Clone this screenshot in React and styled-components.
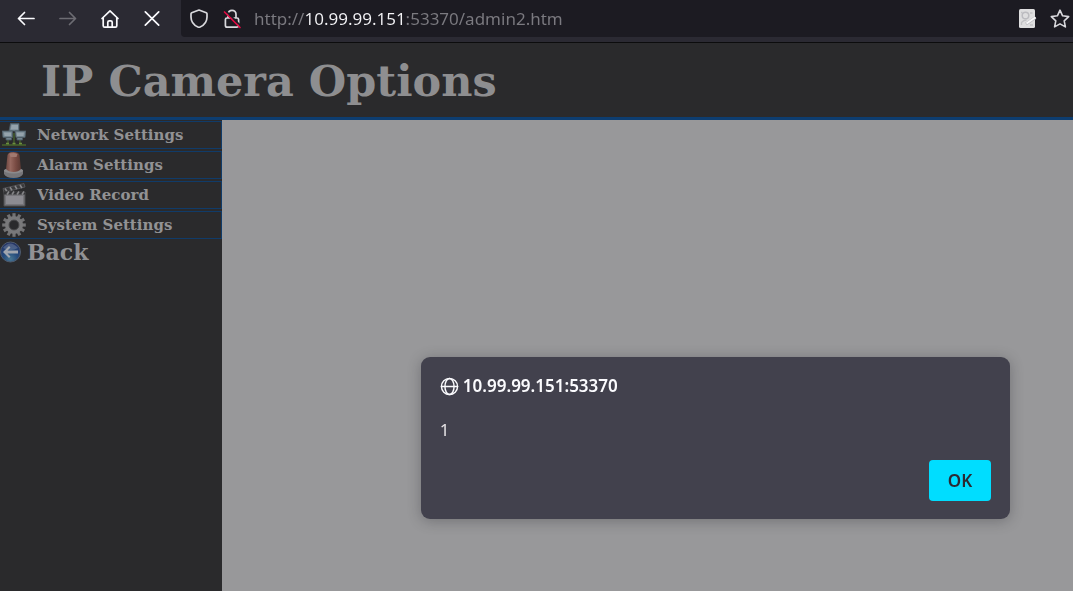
import React from "react";
import styled, { createGlobalStyle } from "styled-components";

const GlobalStyle = createGlobalStyle`
  * { box-sizing: border-box; }
  html, body { margin: 0; background: #2a2a2c; }
  body { overflow: hidden; }
`;

const uiFont = `"Noto Sans", "Open Sans", sans-serif`;
const pageFont = `"DejaVu Serif", "Liberation Serif", serif`;

const Window = styled.div`
  display: flex;
  flex-direction: column;
  min-height: 100vh;
  font-family: ${pageFont};
`;

const Toolbar = styled.div`
  display: flex;
  align-items: flex-start;
  height: 43px;
  background: #2b2a33;
  border-bottom: 1px solid #0c0c0d;
`;

const NavButtons = styled.div`
  display: flex;
  gap: 22px;
  padding: 9px 19px 0 16px;
`;

const ToolButton = styled.button`
  display: flex;
  flex: none;
  padding: 0;
  border: 0;
  background: none;
  color: ${(p) => p.$color || "#fbfbfe"};
`;

const AddressBar = styled.div`
  display: flex;
  flex: 1;
  min-width: 0;
  align-items: center;
  height: 37px;
  padding: 0 3px 0 8px;
  gap: 13px;
  background: #1c1b22;
  border-radius: 0 0 0 4px;
`;

const AddressInput = styled.input`
  flex: 1;
  min-width: 0;
  height: 28px;
  margin-left: -1px;
  padding: 0;
  border: 0;
  outline: 0;
  font: 17px/28px ${uiFont};
  color: #7b7a80;
  background: linear-gradient(
    to right,
    #7b7a80 50px,
    #f4f4f7 50px,
    #f4f4f7 151px,
    #7b7a80 151px
  );
  background-clip: text;
  -webkit-background-clip: text;
  -webkit-text-fill-color: transparent;
`;

const Header = styled.header`
  height: 77px;
  padding: 0 41px;
  background: #2a2a2c;
  border-bottom: 3px solid #0d3d70;
`;

const Title = styled.h1`
  margin: 0;
  font-size: 43px;
  line-height: 76px;
  white-space: nowrap;
  color: #8e8e90;
`;

const Body = styled.div`
  display: flex;
  flex: 1;
`;

const Sidebar = styled.nav`
  width: 222px;
  flex: none;
  padding-top: 1px;
  background: #2a2a2c;
`;

const Menu = styled.ul`
  display: flex;
  flex-direction: column;
  gap: 2px;
  margin: 0;
  padding: 0;
  list-style: none;
`;

const MenuLink = styled.a`
  display: flex;
  align-items: center;
  gap: 11px;
  height: 28px;
  padding-left: 2px;
  border: 1px solid #103b69;
  border-left: 0;
  font-size: 15px;
  font-weight: bold;
  color: #929294;
  text-decoration: none;
`;

const BackLink = styled.a`
  display: flex;
  align-items: center;
  gap: 5px;
  height: 25px;
  font-size: 22px;
  font-weight: bold;
  color: #929294;
  text-decoration: none;
`;

const Content = styled.main`
  flex: 1;
  background: #98989a;
`;

const Alert = styled.dialog`
  position: fixed;
  inset: auto 63px 72px auto;
  display: flex;
  flex-direction: column;
  width: calc(55vw - 1px);
  margin: 0;
  padding: 17px 19px 18px;
  border: 0;
  border-radius: 9px;
  background: #42414d;
  box-shadow: 0 2px 14px rgba(28, 27, 34, 0.3);
  font-family: ${uiFont};
  font-size: 17px;
  line-height: 24px;
  color: #fbfbfe;
`;

const AlertTitle = styled.h2`
  display: flex;
  align-items: center;
  gap: 4px;
  margin: 0 0 20px;
  font-size: 17px;
  font-weight: 600;
`;

const AlertText = styled.p`
  margin: 0 0 18px;
  color: #e6e3e6;
`;

const OkButton = styled.button`
  align-self: flex-end;
  width: 62px;
  height: 41px;
  padding: 0;
  border: 0;
  border-radius: 4px;
  background: #00ddff;
  color: #2b2a33;
  font: 600 17px/24px ${uiFont};
`;

const Stroke = ({ size = 20, width = 1.7, children, ...rest }) => (
  <svg
    width={size}
    height={size}
    viewBox="0 0 20 20"
    fill="none"
    stroke="currentColor"
    strokeWidth={width}
    strokeLinecap="round"
    strokeLinejoin="round"
    aria-hidden="true"
    {...rest}
  >
    {children}
  </svg>
);

const BackArrow = () => (
  <Stroke><path d="M18 9.500H2.500M8.500 3.500 2.500 9.500l6 6" /></Stroke>
);
const ForwardArrow = () => (
  <Stroke><path d="M2 9.500h15.500M11.500 3.500l6 6-6 6" /></Stroke>
);
const Home = () => (
  <Stroke>
    <path d="M2 9.500 10 1.800l8 7.700M3.200 8.600v8.200q0 1.400 1.400 1.400h10.800q1.400 0 1.400-1.400V8.600" />
    <path d="M7.800 18v-4.800q0-1.400 1.400-1.400h1.600q1.400 0 1.400 1.400V18" />
  </Stroke>
);
const Stop = () => (
  <Stroke><path d="m3.300 2.800 13.400 13.400M16.700 2.800 3.300 16.200" /></Stroke>
);
const Shield = () => (
  <Stroke>
    <path d="M10 1 17.300 3.800q.7.300.7 1V8c0 4.500-2.500 8-6.900 10q-1.100.5-2.200 0C4.500 16 2 12.500 2 8V4.800q0-.7.700-1Z" />
  </Stroke>
);
const BrokenLock = () => (
  <Stroke>
    <path d="M6 8V5.300a4 4 0 0 1 8 0V8M5 9h10q1.600 0 1.600 1.600v6q0 1.600-1.600 1.600H5q-1.600 0-1.600-1.600v-6Q3.400 9 5 9Z" />
    <path d="m3.700 1.800 15.500 15.500" stroke="#1c1b22" strokeWidth="1.800" />
    <path d="m2.500 3 15.500 15.500" stroke="#e20b43" />
  </Stroke>
);
const PageAction = () => (
  <svg width="20" height="20" viewBox="0 0 20 20" aria-hidden="true">
    <rect x="2" y="0" width="16" height="19" rx="1.500" fill="#dededf" />
    <circle cx="8.500" cy="6.500" r="3.300" fill="none" stroke="#bcbcc0" strokeWidth="1.500" />
    <path d="M4.500 16v-2.500q2-2.500 5-2.500M4 3.500h1.500M13 4h2.500M13 16h3" fill="none" stroke="#c1c1c4" strokeWidth="1.300" />
    <path d="m9 15 9.500-6.500" stroke="#bcbcc0" strokeWidth="3" />
    <path d="m9.500 14.500 9-6.200" stroke="#f8f8f9" strokeWidth="2" />
  </svg>
);
const Star = () => (
  <Stroke width={1.6}>
    <path d="m10 1.200 2.600 5.600 6.100.8-4.500 4.200 1.200 6.100-5.400-3-5.400 3 1.200-6.100L1.300 7.600l6.100-.8Z" />
  </Stroke>
);
const Globe = () => (
  <Stroke size={19} width={1.5}>
    <circle cx="10" cy="10" r="8.500" />
    <ellipse cx="10" cy="10" rx="4.800" ry="8.500" />
    <path d="M1.500 10h17" />
  </Stroke>
);

const NetworkIcon = () => (
  <svg width="24" height="24" viewBox="0 0 24 24" aria-hidden="true">
    <path d="M0 22h24M6 17v5M12 10v12M18 17v5" stroke="#48652c" strokeWidth="1.300" />
    <path d="M4 20.500h3M10.500 20.500h3M17 20.500h3" stroke="#6d8e3f" strokeWidth="1.500" />
    <g fill="#71838e" stroke="#4c5a64" strokeWidth=".8">
      <path d="M8.500 .5H17V8H7Z" />
      <path d="M0 8h10.500v6.500H1ZM4 14.500h5.500v2.500H4Z" />
      <path d="M13 8h11l-1 6.500h-9ZM15 14.500h5.500v2.500H15Z" />
    </g>
    <path d="M9.500 2H16v4.500H8.800ZM2 9.500h7v3.500H2.500ZM14.500 9.500h7.500l-.5 3.500h-6.500Z" fill="#95a3ac" />
  </svg>
);
const AlarmIcon = () => (
  <svg width="24" height="26" viewBox="0 0 24 26" aria-hidden="true">
    <defs>
      <linearGradient id="alarm-dome">
        <stop offset="0" stopColor="#6d463f" />
        <stop offset=".3" stopColor="#96685f" />
        <stop offset=".65" stopColor="#794b43" />
        <stop offset="1" stopColor="#5a3832" />
      </linearGradient>
    </defs>
    <path d="M2 18h19v4q-2 4-9.500 4T2 22Z" fill="#777679" />
    <ellipse cx="11.500" cy="18.500" rx="9.500" ry="3" fill="#8b8a8c" />
    <path d="M5.500 3q1-3 6-3t6 3l1.500 14q-2.500 3-7.500 3T4 17Z" fill="url(#alarm-dome)" />
    <path d="M7.500 2q4-2 8 0l-1 3h-6Z" fill="#a17970" />
  </svg>
);
const RecordIcon = () => (
  <svg width="24" height="24" viewBox="0 0 24 24" aria-hidden="true">
    <path d="M1 5.500 22 .5l1 3.500L2 9.500Z" fill="#39393b" stroke="#626265" strokeWidth=".7" />
    <path d="m3 5.500 2 3M8 4.300l2 3M13 3l2 3M18 2l2 3" stroke="#858588" strokeWidth="1.600" />
    <path d="M2 9h21v14H2Z" fill="#77767b" stroke="#4c4c4f" />
    <path d="M2 8.500h21v3H2Z" fill="#343437" />
    <path d="m5 11.500 2-3M10 11.500l2-3M15 11.500l2-3M20 11.500l2-3" stroke="#858588" strokeWidth="1.600" />
    <path d="M4 13h17v8H4Z" fill="#8c8b91" />
  </svg>
);
const GearIcon = () => (
  <svg width="24" height="24" viewBox="0 0 24 24" aria-hidden="true">
    <g stroke="#737375" strokeWidth="3.200">
      {[0, 30, 60, 90, 120, 150].map((angle) => (
        <path key={angle} d="M12 .2v23.600" transform={`rotate(${angle} 12 12)`} />
      ))}
    </g>
    <circle cx="12" cy="12" r="7" fill="#2a2a2c" stroke="#79797b" strokeWidth="4" />
    <circle cx="12" cy="12" r="5" fill="#2a2a2c" stroke="#4f4f51" />
  </svg>
);
const BackIcon = () => (
  <svg width="22" height="22" viewBox="0 0 22 22" aria-hidden="true">
    <defs>
      <radialGradient id="back-ball" cx=".5" cy=".85" r=".8">
        <stop offset="0" stopColor="#497792" />
        <stop offset=".45" stopColor="#254b7c" />
        <stop offset="1" stopColor="#243365" />
      </radialGradient>
    </defs>
    <circle cx="10.500" cy="11" r="10" fill="url(#back-ball)" stroke="#4f5b6d" />
    <path d="M3 7Q10-2 18 7q-7 4-15 0Z" fill="#7b89a4" opacity=".45" />
    <path d="m3 11 6-6 1.500 1.500-3 3H18v3H7.500l3 3L9 17Z" fill="#a0a5ae" />
  </svg>
);

const menuItems = [
  { label: "Network Settings", Icon: NetworkIcon },
  { label: "Alarm Settings", Icon: AlarmIcon },
  { label: "Video Record", Icon: RecordIcon },
  { label: "System Settings", Icon: GearIcon },
];

export default function App() {
  return (
    <Window>
      <GlobalStyle />
      <Toolbar>
        <NavButtons>
          <ToolButton aria-label="Back"><BackArrow /></ToolButton>
          <ToolButton aria-label="Forward" $color="#6d6c73" disabled><ForwardArrow /></ToolButton>
          <ToolButton aria-label="Home"><Home /></ToolButton>
          <ToolButton aria-label="Stop"><Stop /></ToolButton>
        </NavButtons>
        <AddressBar>
          <ToolButton aria-label="Tracking protection" $color="#d8d8dc"><Shield /></ToolButton>
          <ToolButton aria-label="Connection not secure" $color="#d8d8dc"><BrokenLock /></ToolButton>
          <AddressInput
            type="text"
            aria-label="Address"
            defaultValue="http://10.99.99.151:53370/admin2.htm"
          />
          <ToolButton aria-label="Page action"><PageAction /></ToolButton>
          <ToolButton aria-label="Bookmark this page" $color="#d8d8dc"><Star /></ToolButton>
        </AddressBar>
      </Toolbar>
      <Header>
        <Title>IP Camera Options</Title>
      </Header>
      <Body>
        <Sidebar>
          <Menu>
            {menuItems.map(({ label, Icon }) => (
              <li key={label}>
                <MenuLink href="#"><Icon />{label}</MenuLink>
              </li>
            ))}
          </Menu>
          <BackLink href="#"><BackIcon />Back</BackLink>
        </Sidebar>
        <Content />
      </Body>
      <Alert open aria-labelledby="alert-title">
        <AlertTitle id="alert-title"><Globe />10.99.99.151:53370</AlertTitle>
        <AlertText>1</AlertText>
        <OkButton>OK</OkButton>
      </Alert>
    </Window>
  );
}
